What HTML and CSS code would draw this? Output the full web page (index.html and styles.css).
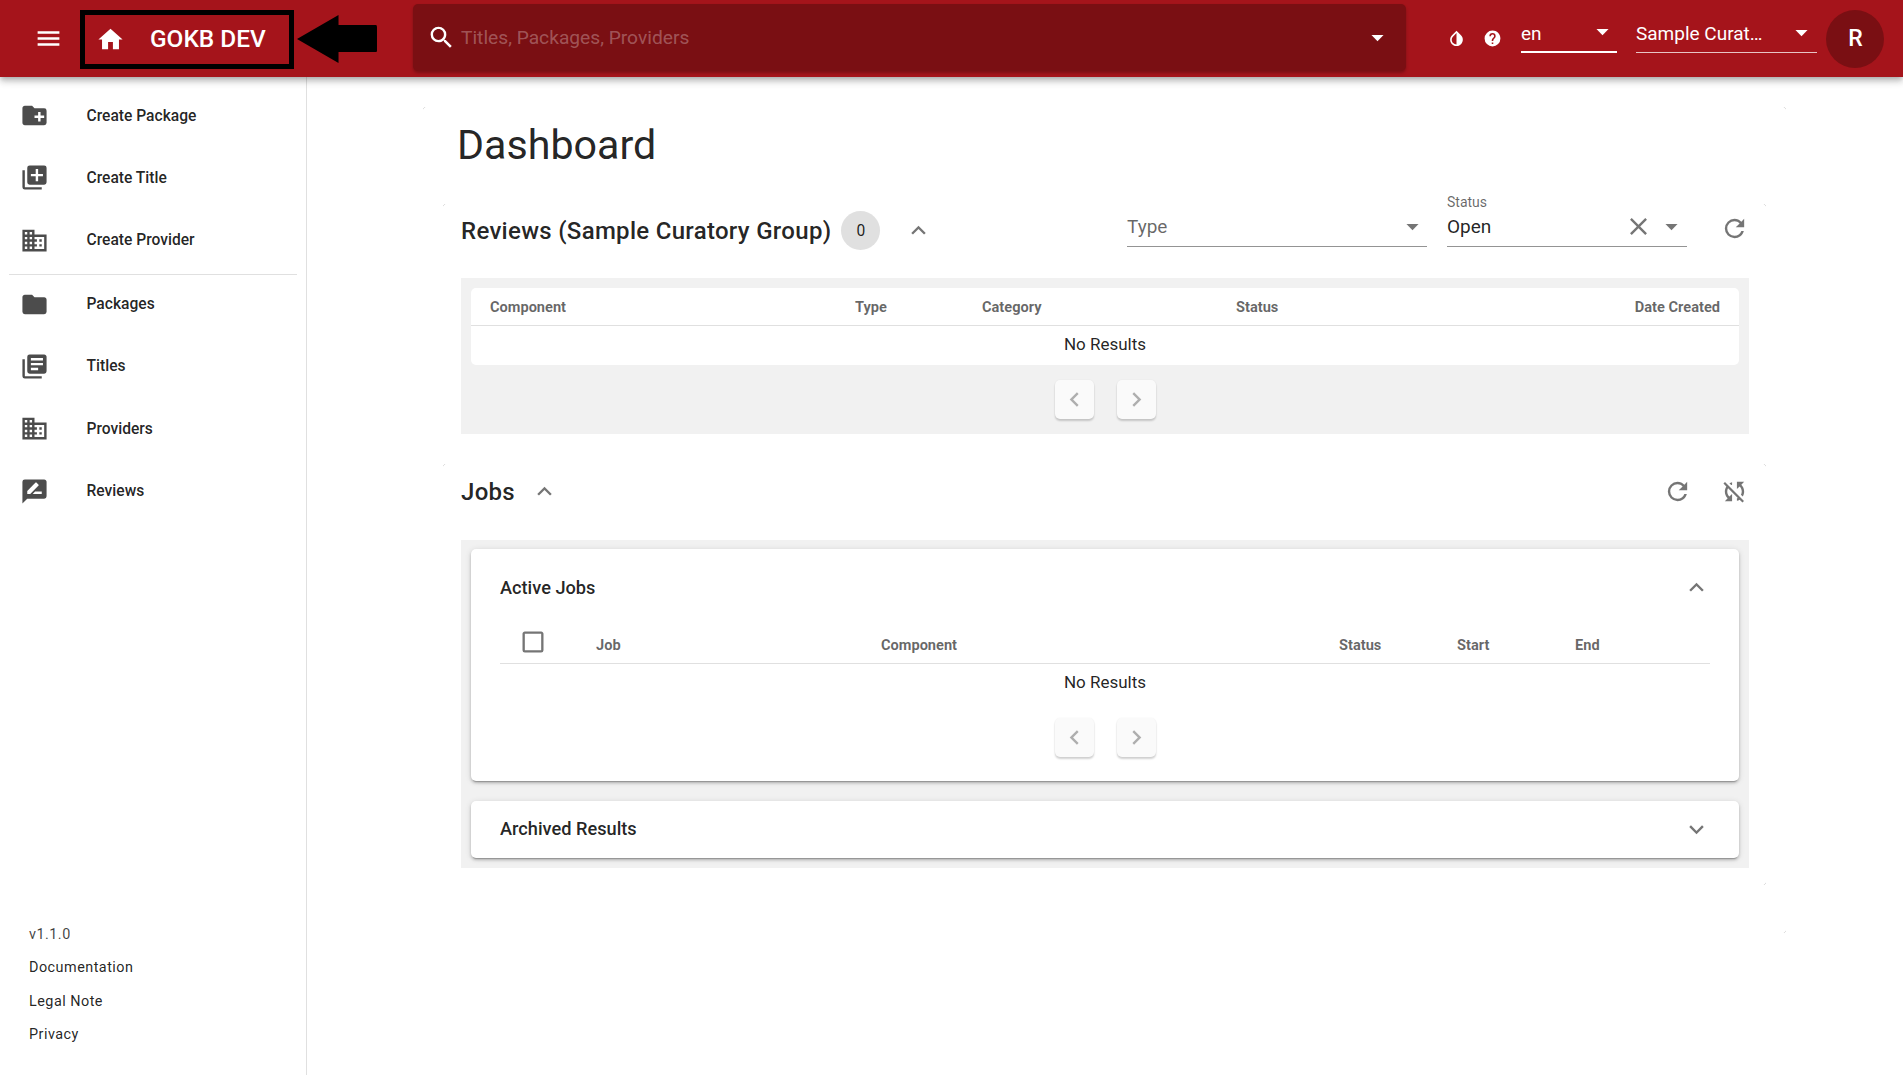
FILE: index.html
```html
<!DOCTYPE html>
<html lang="en">

<head>
    <meta charset="UTF-8">
    <meta name="viewport" content="width=device-width, initial-scale=1.0">
    <title>Dashboard - GOKB DEV</title>
    <link rel="stylesheet" href="styles.css">
</head>

<body>
    <svg class="sprite" xmlns="http://www.w3.org/2000/svg">
        <symbol id="i-menu" viewBox="0 0 24 24"><path d="M3,6H21V8H3V6M3,11H21V13H3V11M3,16H21V18H3V16Z"/></symbol>
        <symbol id="i-home" viewBox="0 0 24 24"><path d="M10,20V14H14V20H19V12H22L12,3L2,12H5V20H10Z"/></symbol>
        <symbol id="i-search" viewBox="0 0 24 24"><path d="M9.5,3A6.5,6.5 0 0,1 16,9.5C16,11.11 15.41,12.59 14.44,13.73L14.71,14H15.5L20.5,19L19,20.5L14,15.5V14.71L13.73,14.44C12.59,15.41 11.11,16 9.5,16A6.5,6.5 0 0,1 3,9.5A6.5,6.5 0 0,1 9.5,3M9.5,5C7,5 5,7 5,9.5C5,12 7,14 9.5,14C12,14 14,12 14,9.5C14,7 12,5 9.5,5Z"/></symbol>
        <symbol id="i-caret" viewBox="0 0 24 24"><path d="M7,10L12,15L17,10H7Z"/></symbol>
        <symbol id="i-invert" viewBox="0 0 24 24"><path d="M12,19.58V19.58C10.4,19.58 8.89,18.96 7.76,17.83C6.62,16.69 6,15.19 6,13.58C6,12 6.62,10.47 7.76,9.34L12,5.1M17.66,7.93L12,2.27V2.27L6.34,7.93C3.22,11.05 3.22,16.12 6.34,19.24C7.9,20.8 9.95,21.58 12,21.58C14.05,21.58 16.1,20.8 17.66,19.24C20.78,16.12 20.78,11.05 17.66,7.93Z"/></symbol>
        <symbol id="i-help" viewBox="0 0 24 24"><path d="M15.07,11.25L14.17,12.17C13.45,12.89 13,13.5 13,15H11V14.5C11,13.39 11.45,12.39 12.17,11.67L13.41,10.41C13.78,10.05 14,9.55 14,9C14,7.89 13.1,7 12,7A2,2 0 0,0 10,9H8A4,4 0 0,1 12,5A4,4 0 0,1 16,9C16,9.88 15.64,10.67 15.07,11.25M13,19H11V17H13M12,2A10,10 0 0,0 2,12A10,10 0 0,0 12,22A10,10 0 0,0 22,12C22,6.47 17.5,2 12,2Z"/></symbol>
        <symbol id="i-folder-plus" viewBox="0 0 24 24"><path d="M10,4L12,6H20A2,2 0 0,1 22,8V18A2,2 0 0,1 20,20H4C2.89,20 2,19.1 2,18V6C2,4.89 2.89,4 4,4H10M15,9V12H12V14H15V17H17V14H20V12H17V9H15Z"/></symbol>
        <symbol id="i-plus-multiple" viewBox="0 0 24 24"><path d="M19,11H15V15H13V11H9V9H13V5H15V9H19M20,2H8A2,2 0 0,0 6,4V16A2,2 0 0,0 8,18H20A2,2 0 0,0 22,16V4A2,2 0 0,0 20,2M4,6H2V20A2,2 0 0,0 4,22H18V20H4V6Z"/></symbol>
        <symbol id="i-domain" viewBox="0 0 24 24"><path d="M18,15H16V17H18M18,11H16V13H18M20,19H12V17H14V15H12V13H14V11H12V9H20M10,7H8V5H10M10,11H8V9H10M10,15H8V13H10M10,19H8V17H10M6,7H4V5H6M6,11H4V9H6M6,15H4V13H6M6,19H4V17H6M12,7V3H2V21H22V7H12Z"/></symbol>
        <symbol id="i-folder" viewBox="0 0 24 24"><path d="M10,4H4C2.89,4 2,4.89 2,6V18A2,2 0 0,0 4,20H20A2,2 0 0,0 22,18V8C22,6.89 21.1,6 20,6H12L10,4Z"/></symbol>
        <symbol id="i-books" viewBox="0 0 24 24"><path d="M19,7H9V5H19M15,15H9V13H15M19,11H9V9H19M20,2H8A2,2 0 0,0 6,4V16A2,2 0 0,0 8,18H20A2,2 0 0,0 22,16V4C22,2.89 21.1,2 20,2M4,6H2V20A2,2 0 0,0 4,22H18V20H4V6Z"/></symbol>
        <symbol id="i-message-draw" viewBox="0 0 24 24"><path d="M18,14H10.5L12.5,12H18M6,14V11.5L12.88,4.64C13.07,4.45 13.39,4.45 13.59,4.64L15.35,6.41C15.55,6.61 15.55,6.92 15.35,7.12L8.47,14M20,2H4A2,2 0 0,0 2,4V22L6,18H20A2,2 0 0,0 22,16V4C22,2.89 21.1,2 20,2Z"/></symbol>
        <symbol id="i-up" viewBox="0 0 24 24"><path d="M7.41,15.41L12,10.83L16.59,15.41L18,14L12,8L6,14L7.41,15.41Z"/></symbol>
        <symbol id="i-down" viewBox="0 0 24 24"><path d="M7.41,8.58L12,13.17L16.59,8.58L18,10L12,16L6,10L7.41,8.58Z"/></symbol>
        <symbol id="i-left" viewBox="0 0 24 24"><path d="M15.41,16.58L10.83,12L15.41,7.41L14,6L8,12L14,18L15.41,16.58Z"/></symbol>
        <symbol id="i-right" viewBox="0 0 24 24"><path d="M8.59,16.58L13.17,12L8.59,7.41L10,6L16,12L10,18L8.59,16.58Z"/></symbol>
        <symbol id="i-close" viewBox="0 0 24 24"><path d="M19,6.41L17.59,5L12,10.59L6.41,5L5,6.41L10.59,12L5,17.59L6.41,19L12,13.41L17.59,19L19,17.59L13.41,12L19,6.41Z"/></symbol>
        <symbol id="i-refresh" viewBox="0 0 24 24"><path d="M17.65,6.35C16.2,4.9 14.21,4 12,4A8,8 0 0,0 4,12A8,8 0 0,0 12,20C15.73,20 18.84,17.45 19.73,14H17.65C16.83,16.33 14.61,18 12,18A6,6 0 0,1 6,12A6,6 0 0,1 12,6C13.66,6 15.14,6.69 16.22,7.78L13,11H20V4L17.65,6.35Z"/></symbol>
        <symbol id="i-sync-off" viewBox="0 0 24 24"><path d="M20,4H14V10L16.24,7.76C17.32,8.85 18,10.34 18,12C18,13 17.75,13.94 17.32,14.77L18.78,16.23C19.55,15 20,13.56 20,12C20,9.79 19.09,7.8 17.65,6.35L20,4M2.86,5.41L5.22,7.77C4.45,9 4,10.44 4,12C4,14.21 4.91,16.2 6.35,17.65L4,20H10V14L7.76,16.24C6.68,15.15 6,13.66 6,12C6,11 6.25,10.06 6.68,9.23L14.76,17.31C14.5,17.44 14.26,17.56 14,17.65V19.74C14.79,19.53 15.54,19.2 16.22,18.78L18.58,21.14L19.85,19.87L4.14,4.14L2.86,5.41M10,6.35V4.26C9.2,4.47 8.45,4.8 7.77,5.22L9.23,6.68C9.5,6.56 9.73,6.44 10,6.35Z"/></symbol>
        <symbol id="i-checkbox" viewBox="0 0 24 24"><path d="M19,3H5C3.89,3 3,3.89 3,5V19A2,2 0 0,0 5,21H19A2,2 0 0,0 21,19V5C21,3.89 20.1,3 19,3M19,5V19H5V5H19Z"/></symbol>
    </svg>

    <header class="app-bar">
        <svg class="icon menu-icon"><use href="#i-menu"/></svg>
        <a class="brand">
            <svg class="icon home-icon"><use href="#i-home"/></svg>
            <span>GOKB DEV</span>
        </a>
        <div class="search">
            <svg class="icon search-icon"><use href="#i-search"/></svg>
            <span class="search-text">Titles, Packages, Providers</span>
            <svg class="icon caret"><use href="#i-caret"/></svg>
        </div>
        <svg class="icon bar-icon invert-icon"><use href="#i-invert"/></svg>
        <svg class="icon bar-icon help-icon"><use href="#i-help"/></svg>
        <div class="bar-select lang-select">
            <span>en</span>
            <svg class="icon caret"><use href="#i-caret"/></svg>
        </div>
        <div class="bar-select group-select">
            <span>Sample Curat…</span>
            <svg class="icon caret"><use href="#i-caret"/></svg>
        </div>
        <div class="avatar">R</div>
        <svg class="annot-arrow" viewBox="0 0 80 48" preserveAspectRatio="none"><path d="M0,24L41,0V10H78Q79,10 79,12V36Q79,37 78,37H41V48Z"/></svg>
    </header>

    <div class="layout">
        <nav class="sidebar">
            <ul class="nav-list">
                <li class="nav-item"><svg class="icon"><use href="#i-folder-plus"/></svg><span>Create Package</span></li>
                <li class="nav-item"><svg class="icon"><use href="#i-plus-multiple"/></svg><span>Create Title</span></li>
                <li class="nav-item"><svg class="icon"><use href="#i-domain"/></svg><span>Create Provider</span></li>
                <li class="nav-divider"></li>
                <li class="nav-item"><svg class="icon"><use href="#i-folder"/></svg><span>Packages</span></li>
                <li class="nav-item"><svg class="icon"><use href="#i-books"/></svg><span>Titles</span></li>
                <li class="nav-item"><svg class="icon"><use href="#i-domain"/></svg><span>Providers</span></li>
                <li class="nav-item"><svg class="icon"><use href="#i-message-draw"/></svg><span>Reviews</span></li>
            </ul>
            <ul class="foot-list">
                <li class="version">v1.1.0</li>
                <li>Documentation</li>
                <li>Legal Note</li>
                <li>Privacy</li>
            </ul>
        </nav>

        <main class="main">
            <div class="page-card corners corners-br">
                <h1 class="page-title">Dashboard</h1>

                <section class="section-card reviews corners">
                    <div class="section-head">
                        <h2>Reviews (Sample Curatory Group)</h2>
                        <span class="count">0</span>
                        <svg class="icon muted head-chevron"><use href="#i-up"/></svg>
                        <div class="filters">
                            <div class="field field-type">
                                <span class="field-value placeholder">Type</span>
                                <svg class="icon muted caret"><use href="#i-caret"/></svg>
                            </div>
                            <div class="field field-status">
                                <label>Status</label>
                                <span class="field-value">Open</span>
                                <svg class="icon muted clear"><use href="#i-close"/></svg>
                                <svg class="icon muted caret"><use href="#i-caret"/></svg>
                            </div>
                            <svg class="icon muted refresh"><use href="#i-refresh"/></svg>
                        </div>
                    </div>

                    <div class="panel review-panel">
                        <div class="table-card">
                            <div class="table-head">
                                <span class="col-component">Component</span>
                                <span class="col-type">Type</span>
                                <span class="col-category">Category</span>
                                <span class="col-status">Status</span>
                                <span class="col-date">Date Created</span>
                            </div>
                            <div class="no-results">No Results</div>
                        </div>
                        <div class="pager">
                            <button class="pager-btn" disabled><svg class="icon"><use href="#i-left"/></svg></button>
                            <button class="pager-btn" disabled><svg class="icon"><use href="#i-right"/></svg></button>
                        </div>
                    </div>
                </section>

                <section class="section-card jobs corners corners-br">
                    <div class="section-head">
                        <h2>Jobs</h2>
                        <svg class="icon muted head-chevron"><use href="#i-up"/></svg>
                        <div class="job-actions">
                            <svg class="icon muted"><use href="#i-refresh"/></svg>
                            <svg class="icon muted"><use href="#i-sync-off"/></svg>
                        </div>
                    </div>

                    <div class="panel jobs-panel">
                        <div class="expansion active-jobs">
                            <div class="expansion-head">
                                <h3>Active Jobs</h3>
                                <svg class="icon muted"><use href="#i-up"/></svg>
                            </div>
                            <div class="jobs-table">
                                <div class="table-head jobs-head">
                                    <svg class="icon muted check"><use href="#i-checkbox"/></svg>
                                    <span class="col-job">Job</span>
                                    <span class="col-jobcomp">Component</span>
                                    <span class="col-jobstatus">Status</span>
                                    <span class="col-start">Start</span>
                                    <span class="col-end">End</span>
                                </div>
                                <div class="no-results">No Results</div>
                                <div class="pager">
                                    <button class="pager-btn" disabled><svg class="icon"><use href="#i-left"/></svg></button>
                                    <button class="pager-btn" disabled><svg class="icon"><use href="#i-right"/></svg></button>
                                </div>
                            </div>
                        </div>
                        <div class="expansion archived">
                            <div class="expansion-head">
                                <h3>Archived Results</h3>
                                <svg class="icon muted"><use href="#i-down"/></svg>
                            </div>
                        </div>
                    </div>
                </section>
            </div>
        </main>
    </div>
</body>

</html>
```

FILE: styles.css
```css
* {
    margin: 0;
    padding: 0;
    box-sizing: border-box;
}

html,
body {
    height: 100%;
    overflow: hidden;
}

body {
    font-family: Roboto, "Liberation Sans", sans-serif;
    color: rgba(0, 0, 0, 0.87);
    background: #fff;
    display: flex;
    flex-direction: column;
}

ul {
    list-style: none;
}

.sprite {
    display: none;
}

.icon {
    width: 29px;
    height: 29px;
    fill: currentColor;
    flex: none;
    display: block;
}

.muted {
    color: rgba(0, 0, 0, 0.54);
}

/* top bar */
.app-bar {
    position: relative;
    z-index: 2;
    flex: none;
    height: 77px;
    background: #a5141b;
    color: #fff;
    display: flex;
    align-items: center;
    padding: 0 19px 0 34px;
    box-shadow: 0 2px 5px -1px rgba(0, 0, 0, 0.2), 0 5px 6px rgba(0, 0, 0, 0.14), 0 1px 12px rgba(0, 0, 0, 0.12);
}

.brand {
    display: flex;
    align-items: center;
    width: 214px;
    height: 59px;
    margin-left: 17px;
    margin-top: 2px;
    padding-left: 11px;
    border: 5px solid #000;
    font-size: 24.4px;
    font-weight: 500;
}

.brand span {
    margin-left: 25px;
    margin-bottom: 2px;
}

.search {
    display: flex;
    align-items: center;
    width: 993px;
    height: 67px;
    margin-left: 119px;
    margin-top: -2px;
    padding: 0 14px 0 14px;
    background: #7a0f13;
    border-radius: 5px;
    box-shadow: 0 2px 3px rgba(0, 0, 0, 0.25);
}

.search-text {
    flex: 1;
    margin-left: 5px;
    font-size: 19.2px;
    color: rgba(255, 255, 255, 0.3);
}

.bar-icon {
    width: 19px;
    height: 19px;
}

.invert-icon {
    margin-left: 41px;
}

.help-icon {
    margin-left: 17px;
}

.bar-select {
    display: flex;
    align-items: center;
    justify-content: space-between;
    height: 33px;
    margin-top: -4px;
    font-size: 19px;
    border-bottom: 1px solid rgba(255, 255, 255, 0.75);
}

.bar-select span {
    margin-bottom: 5px;
}

.lang-select {
    width: 96px;
    margin-left: 19px;
    border-bottom: 2px solid #fff;
}

.group-select {
    width: 181px;
    margin-left: 19px;
}

.bar-select .caret {
    margin-top: -8px;
    margin-right: 1px;
}

.lang-select .caret {
    margin-right: 0;
}

.avatar {
    width: 58px;
    height: 58px;
    margin-left: 9px;
    padding-left: 1px;
    border-radius: 50%;
    background: #7a0f13;
    display: flex;
    align-items: center;
    justify-content: center;
    font-size: 23px;
    font-weight: 500;
}

/* the pointer drawn over the screenshot */
.annot-arrow {
    position: absolute;
    left: 297px;
    top: 15px;
    width: 81px;
    height: 48px;
    fill: #000;
}

/* page */
.layout {
    flex: 1;
    display: flex;
    min-height: 0;
}

.sidebar {
    flex: none;
    width: 307px;
    border-right: 1px solid #e0e0e0;
    display: flex;
    flex-direction: column;
    justify-content: space-between;
    padding: 7.5px 9px 23.5px;
}

.nav-item {
    display: flex;
    align-items: center;
    height: 62.3px;
    padding-left: 10.5px;
    font-size: 15.6px;
    font-weight: 500;
}

.nav-item .icon {
    color: rgba(0, 0, 0, 0.7);
    margin-right: 38px;
}

.nav-divider {
    height: 1px;
    margin: 3px 0 -2.4px;
    background: #e0e0e0;
}

.foot-list {
    padding-left: 20px;
    font-size: 14.4px;
    letter-spacing: 0.48px;
}

.foot-list li {
    height: 33.4px;
    line-height: 33.4px;
}

.version {
    color: rgba(0, 0, 0, 0.75);
}

.main {
    flex: 1;
    padding: 29px 0 0 115px;
}

/* the cards have no shadow, only a trace at their rounded corners */
.corners {
    --corner: transparent 2.5px, #d8d8d8 3px, transparent 3.5px;
    background:
        radial-gradient(circle at 100% 100%, var(--corner)) 0 0 / 4px 4px no-repeat,
        radial-gradient(circle at 0 100%, var(--corner)) 100% 0 / 4px 4px no-repeat;
}

.corners-br {
    background:
        radial-gradient(circle at 100% 100%, var(--corner)) 0 0 / 4px 4px no-repeat,
        radial-gradient(circle at 0 100%, var(--corner)) 100% 0 / 4px 4px no-repeat,
        radial-gradient(circle at 0 0, var(--corner)) 100% 100% / 4px 4px no-repeat;
}

.page-card {
    width: 1365px;
    height: 828px;
    padding: 0 20px;
}

.page-title {
    font-size: 41.2px;
    font-weight: 400;
    line-height: 48px;
    padding: 15px 0 0 15px;
    height: 97px;
}

.section-head {
    display: flex;
    align-items: center;
    height: 75px;
    padding: 0 0 20px 19px;
}

.section-head h2 {
    font-size: 24px;
    font-weight: 500;
    letter-spacing: 0.3px;
    white-space: nowrap;
}

.count {
    width: 39px;
    height: 39px;
    margin-left: 10px;
    border-radius: 50%;
    background: #e0e0e0;
    display: flex;
    align-items: center;
    justify-content: center;
    font-size: 15.6px;
}

.head-chevron {
    margin-left: 24px;
}

.jobs .head-chevron {
    margin-left: 15px;
}

.filters {
    margin-left: auto;
    display: flex;
    align-items: center;
    margin-right: 18px;
}

.field {
    position: relative;
    display: flex;
    align-items: center;
    height: 51px;
    margin-bottom: 18px;
    padding: 18px 0 7px;
    border-bottom: 1px solid rgba(0, 0, 0, 0.42);
    font-size: 19px;
}

.field-type {
    width: 300px;
}

.field-status {
    width: 240px;
    margin-left: 20px;
}

.field-status .caret {
    margin-right: 1px;
}

.field-value {
    flex: 1;
}

.placeholder {
    color: rgba(0, 0, 0, 0.6);
}

.field label {
    position: absolute;
    left: 0;
    top: -2px;
    font-size: 14px;
    color: rgba(0, 0, 0, 0.6);
}

.field .clear {
    margin-right: 4px;
}

.refresh {
    margin-left: 33px;
    margin-bottom: 5px;
}

.job-actions {
    margin-left: auto;
    margin-right: 18px;
    display: flex;
    gap: 28px;
}

.panel {
    width: 1288px;
    margin-left: 19px;
    background: #f1f1f1;
}

.review-panel {
    height: 156px;
    padding: 10px 10px 0;
}

.table-card {
    height: 77px;
    background: #fff;
    border-radius: 5px;
}

.table-head {
    display: flex;
    align-items: center;
    height: 38px;
    padding-top: 1px;
    border-bottom: 1px solid #e0e0e0;
    font-size: 14.6px;
    font-weight: 700;
    color: rgba(0, 0, 0, 0.6);
    white-space: nowrap;
}

.col-component {
    margin-left: 19px;
    width: 365px;
}

.col-type {
    width: 127px;
}

.col-category {
    width: 254px;
}

.col-date {
    margin-left: auto;
    margin-right: 19px;
}

.no-results {
    height: 38px;
    line-height: 36px;
    text-align: center;
    font-size: 17px;
}

.pager {
    display: flex;
    justify-content: center;
    gap: 23px;
    margin-top: 15px;
}

.jobs-table .pager {
    margin-top: 16px;
}

.pager-btn {
    width: 39px;
    height: 39px;
    border: 0;
    border-radius: 5px;
    background: #fafafa;
    color: rgba(0, 0, 0, 0.3);
    display: flex;
    align-items: center;
    justify-content: center;
    box-shadow: 0 2px 2px rgba(0, 0, 0, 0.18), 0 0 2px rgba(0, 0, 0, 0.05);
}

.jobs {
    margin-top: 29px;
    height: 423px;
}

.jobs .section-head {
    height: 77px;
}

.jobs-panel {
    height: 328px;
    padding: 9px 10px 0;
}

.expansion {
    background: #fff;
    border-radius: 5px;
    box-shadow: 0 3px 1px -2px rgba(0, 0, 0, 0.2), 0 2px 3px rgba(0, 0, 0, 0.2), 0 1px 6px rgba(0, 0, 0, 0.12);
}

.active-jobs {
    height: 232px;
    margin-bottom: 20px;
}

.archived {
    height: 57px;
}

.expansion-head {
    display: flex;
    align-items: center;
    justify-content: space-between;
    height: 57px;
    padding: 19px 28px 0 29px;
}

.archived .expansion-head {
    padding: 0 28px 0 29px;
}

.archived h3 {
    margin-bottom: 2px;
}

.expansion-head h3 {
    font-size: 18.2px;
    font-weight: 500;
}

.jobs-table {
    margin: 19px 29px 0;
}

.jobs-head {
    height: 39px;
    padding: 0 0 2px;
    align-items: flex-end;
    line-height: 32px;
}

.check {
    margin-left: 19px;
    width: 28px;
    height: 28px;
    margin-bottom: 5px;
}

.col-job {
    margin-left: 49px;
    width: 285px;
}

.col-jobcomp {
    width: 458px;
}

.col-jobstatus {
    width: 118px;
}

.col-start {
    width: 118px;
}
```
